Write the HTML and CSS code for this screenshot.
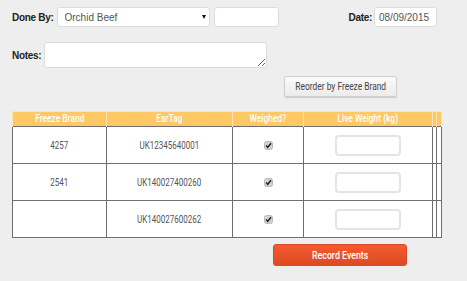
FILE: index.html
```html
<!DOCTYPE html>
<html>
<head>
<meta charset="utf-8">
<link rel="stylesheet" href="styles.css">
</head>
<body>
<div class="page">
  <div class="row row-top">
    <label class="lbl">Done By:</label>
    <div class="select-wrap">
      <select class="sel"><option>Orchid Beef</option></select>
    </div>
    <input class="txt txt-small" type="text">
    <div class="spacer"></div>
    <label class="lbl lbl-date">Date:</label>
    <input class="txt txt-date" type="text" value="08/09/2015">
  </div>
  <div class="row row-notes">
    <label class="lbl">Notes:</label>
    <textarea class="notes"></textarea>
  </div>
  <div class="row row-reorder">
    <button class="btn-grey"><span class="cond">Reorder by Freeze Brand</span></button>
  </div>
  <table class="grid">
    <colgroup>
      <col class="c1"><col class="c2"><col class="c3"><col class="c4"><col class="c5"><col class="c6">
    </colgroup>
    <thead>
      <tr>
        <th><span class="cond">Freeze Brand</span></th>
        <th><span class="cond">EarTag</span></th>
        <th><span class="cond">Weighed?</span></th>
        <th><span class="cond">Live Weight (kg)</span></th>
        <th></th>
        <th></th>
      </tr>
    </thead>
    <tbody>
      <tr>
        <td><span class="cond">4257</span></td>
        <td><span class="cond">UK12345640001</span></td>
        <td><span class="chk"><svg width="9" height="9" viewBox="0 0 9 9"><rect x="0.5" y="0.5" width="8" height="8" rx="2" fill="#d2d2d2" stroke="#b8b8b8"/><path d="M2.2 4.6 L3.7 6.4 L7 2.2" fill="none" stroke="#1e1e1e" stroke-width="1.5"/></svg></span></td>
        <td><input class="wt" type="text"></td>
        <td></td>
        <td></td>
      </tr>
      <tr>
        <td><span class="cond">2541</span></td>
        <td><span class="cond">UK140027400260</span></td>
        <td><span class="chk"><svg width="9" height="9" viewBox="0 0 9 9"><rect x="0.5" y="0.5" width="8" height="8" rx="2" fill="#d2d2d2" stroke="#b8b8b8"/><path d="M2.2 4.6 L3.7 6.4 L7 2.2" fill="none" stroke="#1e1e1e" stroke-width="1.5"/></svg></span></td>
        <td><input class="wt" type="text"></td>
        <td></td>
        <td></td>
      </tr>
      <tr>
        <td></td>
        <td><span class="cond">UK140027600262</span></td>
        <td><span class="chk"><svg width="9" height="9" viewBox="0 0 9 9"><rect x="0.5" y="0.5" width="8" height="8" rx="2" fill="#d2d2d2" stroke="#b8b8b8"/><path d="M2.2 4.6 L3.7 6.4 L7 2.2" fill="none" stroke="#1e1e1e" stroke-width="1.5"/></svg></span></td>
        <td><input class="wt" type="text"></td>
        <td></td>
        <td></td>
      </tr>
    </tbody>
  </table>
  <div class="row row-record">
    <button class="btn-red"><span class="cond">Record Events</span></button>
  </div>
</div>
</body>
</html>
```
FILE: styles.css
```css
html, body {
  margin: 0;
  padding: 0;
  background: #eeeeee;
}
body {
  font-family: "Liberation Sans", Arial, sans-serif;
  font-size: 10px;
  color: #333;
}
.page {
  padding: 7px 0 0 12px;
  width: 429px;
}
.row {
  display: flex;
  align-items: center;
}
.row-top {
  height: 20px;
  width: 425px;
}
.lbl {
  font-weight: bold;
  font-size: 10px;
  letter-spacing: -0.3px;
  color: #222;
  margin-right: 3px;
}
.select-wrap {
  position: relative;
  width: 153px;
  height: 20px;
}
.select-wrap::after {
  content: "";
  position: absolute;
  right: 4px;
  top: 8px;
  border-left: 2.5px solid transparent;
  border-right: 2.5px solid transparent;
  border-top: 4px solid #111;
}
.sel {
  appearance: none;
  -webkit-appearance: none;
  width: 100%;
  height: 20px;
  box-sizing: border-box;
  border: 1px solid #dcdcdc;
  border-radius: 3px;
  background: #fff;
  font-family: "Liberation Sans", Arial, sans-serif;
  font-size: 10px;
  color: #555;
  padding: 0 0 0 7px;
  margin: 0;
  outline: none;
}
.txt {
  height: 20px;
  box-sizing: border-box;
  border: 1px solid #dcdcdc;
  border-radius: 3px;
  background: #fff;
  font-family: "Liberation Sans", Arial, sans-serif;
  font-size: 10px;
  color: #555;
  padding: 0 4px;
  margin: 0;
  outline: none;
}
.txt-small {
  width: 65px;
  margin-left: 4px;
}
.spacer {
  flex: 1;
}
.lbl-date {
  margin-right: 2px;
}
.txt-date {
  width: 63px;
}
.row-notes {
  margin-top: 15px;
  height: 26px;
}
.notes {
  width: 223px;
  height: 26px;
  box-sizing: border-box;
  border: 1px solid #dcdcdc;
  border-radius: 3px;
  background: #fff;
  margin: 0;
  padding: 2px;
  resize: both;
  outline: none;
}
.row-reorder {
  margin-top: 8px;
  padding-left: 272px;
}
.cond {
  display: inline-block;
  font-family: Roboto, "Open Sans", sans-serif;
  transform: scaleX(0.8);
  transform-origin: center;
  white-space: nowrap;
}
.btn-grey {
  width: 113px;
  height: 21px;
  box-sizing: border-box;
  border: 1px solid #d0d0d0;
  border-radius: 2px;
  background: linear-gradient(#fbfbfb, #ebebeb);
  box-shadow: 0 1px 1px rgba(0,0,0,0.15);
  font-size: 10.5px;
  color: #444;
  padding: 0;
  margin: 0;
  display: flex;
  align-items: center;
  justify-content: center;
}
.grid {
  margin-top: 14px;
  border-collapse: collapse;
  table-layout: fixed;
  width: 429px;
}
.c1 { width: 94px; }
.c2 { width: 126px; }
.c3 { width: 71px; }
.c4 { width: 129px; }
.c5 { width: 4px; }
.c6 { width: 5px; }
.grid th {
  background: #fec965;
  color: #fff;
  font-family: Roboto, sans-serif;
  font-weight: 500;
  font-size: 10.5px;
  height: 14px;
  padding: 0;
  border: 1px solid #fde4b0;
  border-bottom: none;
  line-height: 12px;
  white-space: nowrap;
  overflow: hidden;
}
.grid td {
  background: #fff;
  border: 1px solid #6e6e6e;
  height: 36px;
  padding: 0;
  text-align: center;
  font-size: 10px;
  color: #555;
  white-space: nowrap;
  overflow: hidden;
}
.chk {
  display: inline-block;
  width: 9px;
  height: 9px;
  vertical-align: middle;
  line-height: 0;
}
.wt {
  width: 66px;
  height: 21px;
  box-sizing: border-box;
  border: 2px solid #e4e4e4;
  border-radius: 4px;
  background: #fff;
  margin: 0;
  padding: 0;
  outline: none;
  vertical-align: middle;
}
.row-record {
  margin-top: 6px;
  padding-left: 261px;
}
.btn-red {
  width: 134px;
  height: 22px;
  box-sizing: border-box;
  border: 1px solid #d9482a;
  border-radius: 3px;
  background: linear-gradient(#f45b2f, #dd4a22);
  box-shadow: 0 1px 1px rgba(0,0,0,0.15);
  font-size: 11px;
  font-weight: 500;
  color: #fff;
  padding: 0;
  margin: 0;
  display: flex;
  align-items: center;
  justify-content: center;
}
```
